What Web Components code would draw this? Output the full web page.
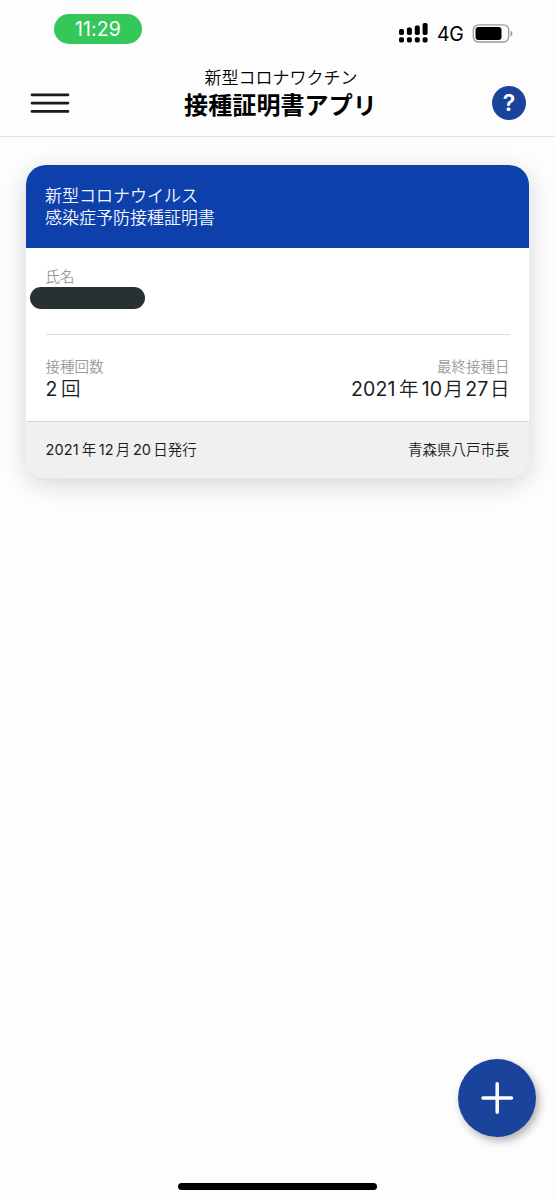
<!DOCTYPE html>
<html lang="ja">
<head>
<meta charset="utf-8">
<title>接種証明書アプリ</title>
<style>
html,body{margin:0;height:100%;background:#fdfdfd}
body{font-family:Inter,"Noto Sans CJK JP",sans-serif;color:#1c1c1c;overflow:hidden}
</style>
</head>
<body>
<certificate-app></certificate-app>
<script>
const define = (name, html) => customElements.define(name, class extends HTMLElement {
  constructor() {
    super();
    this.attachShadow({ mode: 'open' }).innerHTML = html;
  }
});

define('status-bar', `
<style>
:host{display:flex;justify-content:space-between;align-items:flex-start;height:56px;box-sizing:border-box;padding:14px 42px 0 54px}
.time{width:88px;height:30px;border-radius:15px;background:#34c759;color:#fff;font-size:19.5px;line-height:30px;text-align:center;letter-spacing:.1px;font-weight:400}
.right{display:flex;align-items:center;height:38px}
.net{font-size:19.5px;line-height:24px;margin-left:9px;width:26px;color:#000;margin-top:2px;margin-right:9px;white-space:nowrap;letter-spacing:-.3px}
svg{display:block}
</style>
<div class="time">11:29</div>
<div class="right">
<svg width="29" height="20" viewBox="0 0 29 20">
<rect x="0" y="6" width="5" height="6" rx="1.7"/><rect x="7.9" y="4.5" width="5" height="7.5" rx="1.7"/><rect x="15.8" y="2.4" width="5" height="9.6" rx="1.7"/><rect x="23.6" y="0" width="5" height="12" rx="1.7"/>
<rect x="0" y="14.3" width="5" height="5.2" rx="1.7"/><rect x="7.9" y="14.3" width="5" height="5.2" rx="1.7"/><rect x="15.8" y="14.3" width="5" height="5.2" rx="1.7"/><rect x="23.6" y="14.3" width="5" height="5.2" rx="1.7"/>
</svg>
<div class="net">4G</div>
<svg width="41" height="19" viewBox="0 0 41 19">
<rect x="1.3" y=".8" width="35.4" height="17.2" rx="5.2" fill="none" stroke="#999" stroke-width="1.3"/>
<rect x="3.5" y="2.9" width="26" height="13" rx="3"/>
<path d="M38.5 6.4q2 1 2 3t-2 3z" fill="#999"/>
</svg>
</div>`);

define('app-header', `
<style>
:host{display:grid;grid-template-columns:1fr auto 1fr;height:80px;border-bottom:1px solid #e2e2e2;padding:0 29px 0 30px}
svg{display:block}
.menu{margin-top:37px}
.help{justify-self:end;margin-top:30px}
.text{text-align:center;color:#000;padding-top:11px;margin-left:5px}
.sub{font-size:17px;line-height:23px;font-weight:350;margin-left:1px}
.main{font-size:24px;line-height:31px;font-weight:700;letter-spacing:.1px}
.help{width:34px;height:34px;border-radius:50%;background:#1a449b;color:#fff;font-weight:600;font-size:23px;line-height:34px;text-align:center}
</style>
<svg class="menu" width="40" height="21" viewBox="0 0 40 21" stroke="#1a1a1a" stroke-width="2.7" stroke-linecap="round"><path d="M2 1.8h36M2 10.1h36M2 18.4h36"/></svg>
<div class="text"><div class="sub"><slot name="sub"></slot></div><div class="main"><slot></slot></div></div>
<div class="help">?</div>`);

define('card-field', `
<style>
:host{display:block}
.label{font-size:14.5px;line-height:22px;color:#9a9a9a;font-weight:350}
.value{font-size:19.5px;line-height:24px;height:24px;margin-top:-1px;letter-spacing:.1px;font-weight:350}
</style>
<div class="label"><slot name="label"></slot></div>
<div class="value"><slot></slot></div>`);

define('redacted-name', `
<style>:host{display:block;width:115px;height:21.5px;border-radius:11px;background:#293033;margin:.4px 0 0 -16px}</style>`);

define('certificate-card', `
<style>
:host{display:block;margin:28px 26px 0;border-radius:20px;overflow:hidden;background:#fff;height:313px;box-shadow:0 6px 26px rgba(0,0,0,.16)}
.head{background:#0d40ab;color:#f4f7ff;height:83px;box-sizing:border-box;padding:20px 19px 0;font-size:17px;line-height:22px;font-weight:350}
.name{height:87px;box-sizing:border-box;padding-top:18px;margin:0 19.5px;border-bottom:1px solid #dedede}
.name card-field{display:flow-root}
.row{display:flex;justify-content:space-between;height:86px;box-sizing:border-box;padding:21px 19.5px 0 19.5px}
.end{text-align:right}
.foot{display:flex;justify-content:space-between;height:57px;box-sizing:border-box;border-top:1px solid #d6d6d6;background:#f0f0f0;padding:16px 19.5px 0;font-size:14.5px;line-height:24px;font-weight:350}
.n{font-weight:400;letter-spacing:.1px;margin:0 1.6px 0 1.8px}
.n.lead{margin-left:0;margin-right:3.5px}
.n.ten{margin-left:3.2px}
.foot .n{letter-spacing:.15px;margin:0 2px 0 2.6px}
.foot .n:first-child{margin-left:0;margin-right:2.8px}
</style>
<div class="head">新型コロナウイルス<br>感染症予防接種証明書</div>
<div class="name"><card-field><span slot="label">氏名</span><redacted-name></redacted-name></card-field></div>
<div class="row">
<card-field><span slot="label">接種回数</span><span class="n lead">2</span>回</card-field>
<card-field class="end"><span slot="label">最終接種日</span><span class="n lead">2021</span>年<span class="n ten">10</span>月<span class="n">27</span>日</card-field>
</div>
<div class="foot"><span class="date"><span class="n">2021</span>年<span class="n">12</span>月<span class="n">20</span>日発行</span><span>青森県八戸市長</span></div>`);

define('add-button', `
<style>
:host{display:block;width:78px;height:78px;border-radius:50%;background:#1a449b;box-shadow:3px 4px 9px rgba(0,0,0,.3)}
svg{display:block}
</style>
<svg width="78" height="78" viewBox="0 0 78 78" stroke="#fff" stroke-width="3.5" stroke-linecap="round"><path d="M25 39h28.5M39.2 24.8v28.5"/></svg>`);

define('home-indicator', `
<style>:host{display:block;width:199px;height:7px;border-radius:4px;background:#000}</style>`);

define('certificate-app', `
<style>
:host{display:flex;flex-direction:column;height:1200px}
add-button{margin:auto 19.5px 46px auto}
home-indicator{margin:0 auto 10px;flex:none}
</style>
<status-bar></status-bar>
<app-header><span slot="sub">新型コロナワクチン</span>接種証明書アプリ</app-header>
<certificate-card></certificate-card>
<add-button></add-button>
<home-indicator></home-indicator>`);
</script>
</body>
</html>
